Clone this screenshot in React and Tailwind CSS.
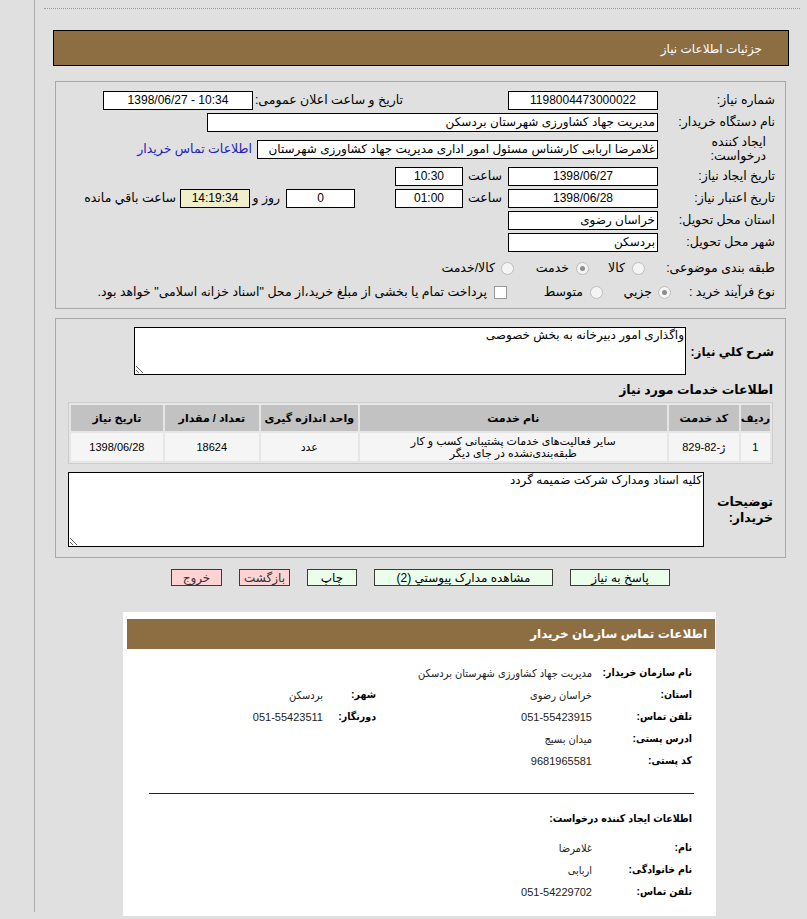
const FONT = "font-['Liberation_Sans','DejaVu_Sans',sans-serif]";

function Box({ className = '', center, ltr, children }) {
    return (
        <div dir={ltr ? 'ltr' : undefined} className={`h-[19px] shrink-0 overflow-hidden whitespace-nowrap border border-black bg-white px-[2px] text-[12px] leading-[17px] ${center ? 'text-center' : 'text-right'} ${className}`}>
            {children}
        </div>
    );
}

function Radio({ checked }) {
    return (
        <span className="inline-flex h-[13px] w-[13px] shrink-0 items-center justify-center rounded-full border border-[#bdbdbd] bg-[#f4f4f4]">
            {checked && <span className="h-[5px] w-[5px] rounded-full bg-[#8c8c8c]" />}
        </span>
    );
}

function Btn({ pink, className = '', children }) {
    return (
        <div className={`flex h-[17px] shrink-0 items-center justify-center whitespace-nowrap border border-[#3a3a3a] text-[12px] leading-none ${pink ? 'bg-[#ffd3d3] text-[#333]' : 'bg-[#ebfdeb]'} ${className}`}>
            {children}
        </div>
    );
}

function CardRow({ label, value, label2, value2, className = '' }) {
    return (
        <div className={`flex h-[22px] items-center whitespace-nowrap ${className}`}>
            <div className="w-[100px] shrink-0 text-[10.5px] font-bold">{label}</div>
            <div className="w-[216px] shrink-0 text-[11px] text-[#222]">{value}</div>
            {label2 && <div className="w-[53px] shrink-0 text-[10.5px] font-bold">{label2}</div>}
            {value2 && <div className="text-[11px] text-[#222]">{value2}</div>}
        </div>
    );
}

export default function App() {
    return (
        <div className={`flex min-h-[919px] bg-[#e0e0e0] text-[12.5px] text-black ${FONT}`}>
            <div className="mb-[7px] w-[35px] shrink-0 border-r border-[#acacac]" />
            <div className="flex-1">
                <div className="ml-[9px] mr-[7px] pt-[8px]">
                    <div className="border-t border-dotted border-[#9a9a9a]" />
                </div>

                <div className="ml-[18px] w-[736px]">
                    <div dir="rtl" className="mt-[21px] flex h-[36px] items-center border border-black bg-[#8d6e43] pr-[26px] pt-[2px] text-[12px] text-white">
                        جزئیات اطلاعات نیاز
                    </div>

                    {/* form panel */}
                    <div dir="rtl" className="ml-[2px] mt-[15px] w-[731px] whitespace-nowrap border border-[#a8a8a8] pb-[5px] pr-[10px] pt-[7px]">
                        <div className="flex h-[22px] items-center">
                            <div className="w-[112px] shrink-0">شماره نیاز:</div>
                            <Box className="mr-[5px] w-[150px]" center ltr>1198004473000022</Box>
                            <div className="mr-[105px] w-[150px] shrink-0">تاریخ و ساعت اعلان عمومی:</div>
                            <Box className="w-[150px]" center ltr>1398/06/27 - 10:34</Box>
                        </div>
                        <div className="flex h-[22px] items-center">
                            <div className="w-[112px] shrink-0">نام دستگاه خریدار:</div>
                            <Box className="mr-[5px] w-[451px]">مدیریت جهاد کشاورزی شهرستان بردسکن</Box>
                        </div>
                        <div className="flex h-[32px] items-center">
                            <div className="w-[112px] shrink-0 pr-[9px] leading-[14px]">ایجاد کننده<br />درخواست:</div>
                            <Box className="mr-[5px] w-[401px]">غلامرضا اربابی کارشناس مسئول امور اداری مدیریت جهاد کشاورزی شهرستان</Box>
                            <span className="mr-[5px] text-[#2323b8]">اطلاعات تماس خریدار</span>
                        </div>
                        <div className="flex h-[22px] items-center">
                            <div className="w-[112px] shrink-0">تاریخ ایجاد نیاز:</div>
                            <Box className="mr-[5px] w-[150px]" center ltr>1398/06/27</Box>
                            <div className="w-[45px] shrink-0 pr-[6px]">ساعت</div>
                            <Box className="w-[68px]" center ltr>10:30</Box>
                        </div>
                        <div className="flex h-[22px] items-center">
                            <div className="w-[112px] shrink-0">تاریخ اعتبار نیاز:</div>
                            <Box className="mr-[5px] w-[150px]" center ltr>1398/06/28</Box>
                            <div className="w-[45px] shrink-0 pr-[6px]">ساعت</div>
                            <Box className="w-[68px]" center ltr>01:00</Box>
                            <Box className="mr-[40px] w-[69px]" center>0</Box>
                            <div className="w-[36px] shrink-0 pr-[6px]">روز و</div>
                            <Box className="w-[70px] !bg-[#f1eecb]" center ltr>14:19:34</Box>
                            <span className="mr-[4px]">ساعت باقي مانده</span>
                        </div>
                        <div className="flex h-[22px] items-center">
                            <div className="w-[112px] shrink-0">استان محل تحویل:</div>
                            <Box className="mr-[5px] w-[150px]">خراسان رضوی</Box>
                        </div>
                        <div className="flex h-[22px] items-center">
                            <div className="w-[112px] shrink-0">شهر محل تحویل:</div>
                            <Box className="mr-[5px] w-[150px]">بردسکن</Box>
                        </div>
                        <div className="mt-[2px] flex h-[26px] items-center">
                            <div className="w-[112px] shrink-0">طبقه بندی موضوعی:</div>
                            <div className="mr-[18px] flex w-[56px] shrink-0 items-center gap-[7px]"><Radio />کالا</div>
                            <div className="flex w-[75px] shrink-0 items-center gap-[7px]"><Radio checked />خدمت</div>
                            <div className="flex items-center gap-[6px]"><Radio />کالا/خدمت</div>
                        </div>
                        <div className="flex h-[22px] items-center">
                            <div className="w-[104px] shrink-0">نوع فرآیند خرید :</div>
                            <div className="flex w-[68px] shrink-0 items-center gap-[6px]"><Radio checked />جزيي</div>
                            <div className="flex w-[96px] shrink-0 items-center gap-[7px]"><Radio />متوسط</div>
                            <div className="flex items-center gap-[7px]">
                                <span className="h-[13px] w-[13px] shrink-0 border border-[#9a9a9a] bg-white" />
                                پرداخت تمام یا بخشی از مبلغ خرید،از محل "اسناد خزانه اسلامی" خواهد بود.
                            </div>
                        </div>
                    </div>

                    {/* description panel */}
                    <div dir="rtl" className="ml-[2px] mt-[9px] w-[731px] border border-[#a8a8a8] pb-[10px] pt-[8px]">
                        <div className="flex items-center">
                            <div className="w-[99px] shrink-0 whitespace-nowrap pr-[11px] pt-[2px] text-[12px] font-bold">شرح کلي نیاز:</div>
                            <textarea readOnly dir="rtl" defaultValue="واگذاری امور دبیرخانه به بخش خصوصی" className="h-[48px] w-[552px] border border-black bg-white px-[1px] text-[12px] leading-[15px] outline-none" />
                        </div>
                        <div className="mt-[7px] h-[16px] pr-[12px] text-[12.5px] font-bold leading-[16px]">اطلاعات خدمات مورد نیاز</div>
                        <div className="mr-[12px] mt-[4px] w-[705px] border border-[#cdcdcd] bg-[#e6e6e6]">
                            <table className="w-full border-separate border-spacing-[2px] text-center text-[11px]">
                                <thead>
                                    <tr className="h-[26px] bg-[#c2c2c2]">
                                        <th className="w-[29px] font-bold">ردیف</th>
                                        <th className="w-[70px] font-bold">کد خدمت</th>
                                        <th className="w-[307px] font-bold">نام خدمت</th>
                                        <th className="w-[97px] font-bold">واحد اندازه گیری</th>
                                        <th className="w-[94px] font-bold">تعداد / مقدار</th>
                                        <th className="font-bold">تاریخ نیاز</th>
                                    </tr>
                                </thead>
                                <tbody>
                                    <tr className="h-[28px] bg-[#f5f5f5]">
                                        <td>1</td>
                                        <td>ژ-82-829</td>
                                        <td className="leading-[12px]">سایر فعالیت‌های خدمات پشتیبانی کسب و کار<br />طبقه‌بندی‌نشده در جای دیگر</td>
                                        <td>عدد</td>
                                        <td>18624</td>
                                        <td>1398/06/28</td>
                                    </tr>
                                </tbody>
                            </table>
                        </div>
                        <div className="mt-[8px] flex items-center">
                            <div className="w-[81px] shrink-0 pr-[12px] text-[12.5px] font-bold leading-[16px]">توضیحات خریدار:</div>
                            <textarea readOnly dir="rtl" defaultValue="کلیه اسناد ومدارک شرکت ضمیمه گردد" className="h-[75px] w-[636px] border border-black bg-white px-[1px] text-[12px] leading-[15px] outline-none" />
                        </div>
                    </div>

                    {/* buttons */}
                    <div dir="rtl" className="ml-[2px] mt-[11px] flex w-[731px] justify-center gap-[17px]">
                        <Btn className="w-[100px]">پاسخ به نیاز</Btn>
                        <Btn className="w-[179px]">مشاهده مدارک پیوستي (2)</Btn>
                        <Btn className="w-[50px]">چاپ</Btn>
                        <Btn pink className="w-[51px]">بازگشت</Btn>
                        <Btn pink className="w-[51px]">خروج</Btn>
                    </div>

                    {/* contact card */}
                    <div dir="rtl" className="ml-[70px] mt-[26px] w-[593px] bg-white pb-[13px] pl-[4px] pr-[1px] pt-[7px] font-['Liberation_Sans','DejaVu_Sans_Condensed','DejaVu_Sans',sans-serif]">
                        <div className="flex h-[30px] items-center bg-[#8d6e43] pr-[8px] font-['Liberation_Sans','DejaVu_Sans',sans-serif] text-[12px] font-bold text-white">
                            اطلاعات تماس سازمان خریدار
                        </div>
                        <div className="pr-[23px]">
                            <CardRow className="mt-[13px]" label="نام سازمان خریدار:" value="مدیریت جهاد کشاورزی شهرستان بردسکن" />
                            <CardRow label="استان:" value="خراسان رضوی" label2="شهر:" value2="بردسکن" />
                            <CardRow label="تلفن تماس:" value="051-55423915" label2="دورنگار:" value2="051-55423511" />
                            <CardRow label="ادرس پستی:" value="میدان بسیج" />
                            <CardRow label="کد پستی:" value="9681965581" />
                        </div>
                        <div className="ml-[22px] mr-[21px] mt-[21px] border-t border-[#222]" />
                        <div className="pr-[23px]">
                            <div className="mt-[14px] flex h-[22px] items-center text-[10.5px] font-bold">اطلاعات ایجاد کننده درخواست:</div>
                            <CardRow className="mt-[7px]" label="نام:" value="غلامرضا" />
                            <CardRow label="نام خانوادگی:" value="اربابی" />
                            <CardRow label="تلفن تماس:" value="051-54229702" />
                        </div>
                    </div>
                </div>
            </div>
        </div>
    );
}
